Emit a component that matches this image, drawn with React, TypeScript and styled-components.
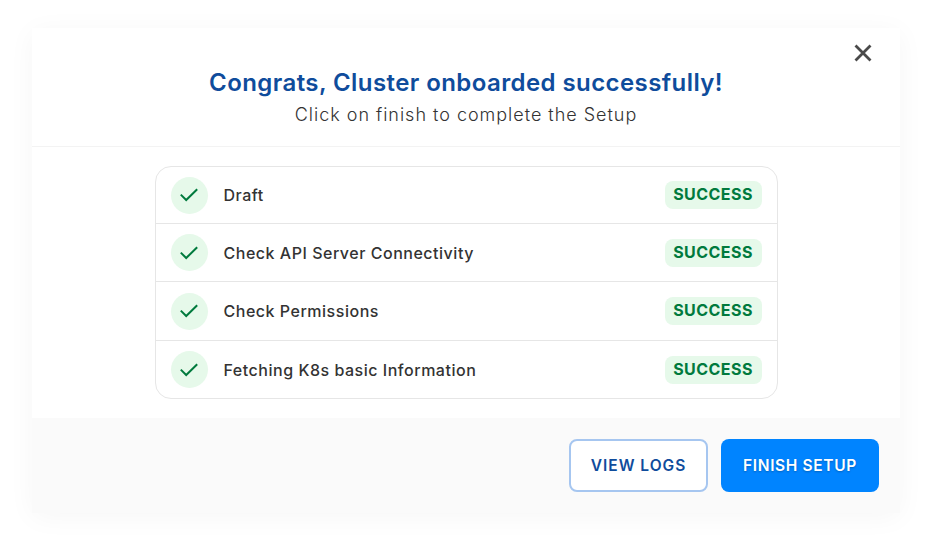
import styled, { createGlobalStyle } from "styled-components";

const GlobalStyle = createGlobalStyle`
  html, body {
    margin: 0;
    background: #fff;
    font-family: Inter, "Noto Sans", sans-serif;
  }
  * {
    box-sizing: border-box;
  }
`;

const steps = [
  "Draft",
  "Check API Server Connectivity",
  "Check Permissions",
  "Fetching K8s basic Information",
];

export default function App() {
  return (
    <>
      <GlobalStyle />
      <Page>
        <Modal>
          <Header>
            <CloseButton aria-label="Close">
              <svg width="18" height="18" viewBox="0 0 18 18" fill="none">
                <path d="M1.5 1.5L16.5 16.5M16.5 1.5L1.5 16.5" stroke="#4a4a4a" strokeWidth="2.8" />
              </svg>
            </CloseButton>
            <Title>Congrats, Cluster onboarded successfully!</Title>
            <Subtitle>Click on finish to complete the Setup</Subtitle>
          </Header>
          <Body>
            <StepList>
              {steps.map((step) => (
                <StepRow key={step}>
                  <CheckCircle>
                    <svg width="18" height="14" viewBox="0 0 18 14" fill="none">
                      <path d="M0.8 6.6L6.2 12L17.2 1.2" stroke="#007a3d" strokeWidth="2" />
                    </svg>
                  </CheckCircle>
                  <StepName>{step}</StepName>
                  <Status>SUCCESS</Status>
                </StepRow>
              ))}
            </StepList>
          </Body>
          <Footer>
            <OutlineButton>VIEW LOGS</OutlineButton>
            <PrimaryButton>FINISH SETUP</PrimaryButton>
          </Footer>
        </Modal>
      </Page>
    </>
  );
}

const Page = styled.div`
  width: 932px;
  height: 556px;
  padding: 28px 32px 0;
  overflow: hidden;
`;

const Modal = styled.div`
  width: 868px;
  height: 485px;
  background: #fff;
  box-shadow: 0 4px 26px rgba(0, 0, 0, 0.04);
  display: flex;
  flex-direction: column;
`;

const Header = styled.header`
  position: relative;
  height: 119px;
  padding-top: 40px;
  border-bottom: 1px solid #f3f3f3;
  text-align: center;
`;

const CloseButton = styled.button`
  position: absolute;
  top: 16px;
  right: 28px;
  width: 18px;
  height: 18px;
  padding: 0;
  border: 0;
  background: none;
  display: flex;
`;

const Title = styled.h1`
  margin: 0;
  font-size: 24px;
  line-height: 30px;
  font-weight: 600;
  letter-spacing: 0.42px;
  color: #0f4c9c;
`;

const Subtitle = styled.p`
  margin: 5px 0 0;
  font-size: 18px;
  line-height: 24px;
  font-weight: 300;
  letter-spacing: 0.98px;
  color: #333;
`;

const Body = styled.main`
  height: 271px;
  padding-top: 19px;
  display: flex;
  justify-content: center;
`;

const StepList = styled.div`
  width: 623px;
  height: 233px;
  border: 1.5px solid #e6e6e6;
  border-radius: 16px;
  display: grid;
  grid-template-rows: 57px 58px 59px 1fr;
`;

const StepRow = styled.div`
  display: flex;
  align-items: center;
  padding: 0 15px;
  border-bottom: 1.5px solid #e6e6e6;

  &:last-child {
    border-bottom: 0;
  }
`;

const CheckCircle = styled.span`
  width: 37px;
  height: 37px;
  border-radius: 50%;
  background: #e6f9ea;
  display: flex;
  align-items: center;
  justify-content: center;
  flex: none;
`;

const StepName = styled.span`
  flex: 1;
  margin-left: 16px;
  font-size: 16px;
  font-weight: 500;
  letter-spacing: 0.52px;
  color: #333;
`;

const Status = styled.span`
  width: 97px;
  height: 28px;
  border-radius: 8px;
  background: #e6f9ea;
  color: #007a3d;
  font-size: 16px;
  font-weight: 700;
  line-height: 27px;
  letter-spacing: 0.45px;
  text-align: center;
`;

const Footer = styled.footer`
  flex: 1;
  background: #fafafa;
  padding: 21px 21px 0 0;
  display: flex;
  justify-content: flex-end;
  gap: 13px;
`;

const OutlineButton = styled.button`
  width: 139px;
  height: 53px;
  border: 2px solid #a6c6f0;
  border-radius: 8px;
  background: #fff;
  color: #0f4c9c;
  font-family: inherit;
  font-size: 15.5px;
  font-weight: 600;
  letter-spacing: 1px;
`;

const PrimaryButton = styled.button`
  width: 158px;
  height: 53px;
  border: 0;
  border-radius: 8px;
  background: #0084ff;
  color: #fff;
  font-family: inherit;
  font-size: 15.5px;
  font-weight: 600;
  letter-spacing: 0.65px;
  text-shadow: 0 1px 2px rgba(0, 0, 0, 0.25);
`;
